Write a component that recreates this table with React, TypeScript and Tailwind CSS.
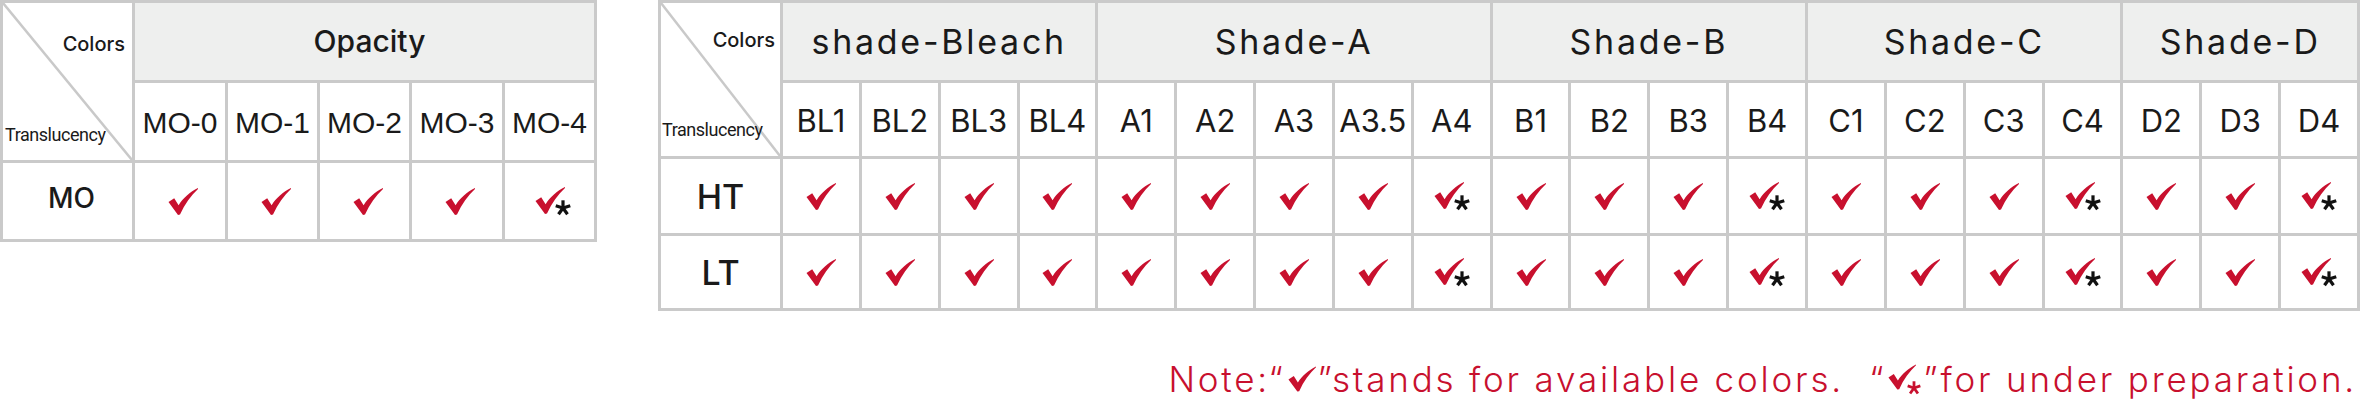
const RED = "#c8102e";

const Check = ({ className = "w-[30px] h-[27px]" }: { className?: string }) => (
  <svg viewBox="0 0 30 27" className={className}>
    <path
      d="M0.5 14 L6.2 10.3 L10.6 17.2 C15 10 22 4 30 0 L30 1 C23 7.5 16.8 16 12 26.6 L10 26.9 Z"
      fill={RED}
    />
  </svg>
);

const Asterisk = ({ color = "#111", className = "w-[15px] h-[15px]" }: { color?: string; className?: string }) => (
  <svg viewBox="0 0 15 15" className={className}>
    <g stroke={color} strokeWidth="3" strokeLinecap="butt">
      <line x1="7.5" y1="7.5" x2="7.5" y2="0.3" />
      <line x1="7.5" y1="7.5" x2="14.3" y2="5.3" />
      <line x1="7.5" y1="7.5" x2="11.7" y2="13.4" />
      <line x1="7.5" y1="7.5" x2="3.3" y2="13.4" />
      <line x1="7.5" y1="7.5" x2="0.7" y2="5.3" />
    </g>
  </svg>
);

const Mark = ({ star }: { star?: boolean }) =>
  star ? (
    <div className="flex items-start">
      <Check />
      <Asterisk className="w-[16px] h-[16px] -ml-[10px] mt-[13px]" />
    </div>
  ) : (
    <Check />
  );

const Diagonal = ({ colorsClass, transClass }: { colorsClass: string; transClass: string }) => (
  <div className="relative bg-white row-span-2">
    <svg className="absolute inset-0 w-full h-full" preserveAspectRatio="none" viewBox="0 0 100 100">
      <line x1="0" y1="0" x2="100" y2="100" stroke="#c9c9c9" strokeWidth="2.5" vectorEffect="non-scaling-stroke" />
    </svg>
    <div className={`absolute font-['Inter',sans-serif] text-[20px] font-medium text-[#1a1a1a] ${colorsClass}`}>Colors</div>
    <div
      className={`absolute font-['Liberation_Sans_Narrow','Roboto',sans-serif] text-[18px] text-[#1a1a1a] tracking-tight ${transClass}`}
    >
      Translucency
    </div>
  </div>
);

const spans: Record<number, string> = { 3: "col-span-3", 4: "col-span-4", 5: "col-span-5" };

const groups = [
  { name: "shade-Bleach", cols: ["BL1", "BL2", "BL3", "BL4"] },
  { name: "Shade-A", cols: ["A1", "A2", "A3", "A3.5", "A4"] },
  { name: "Shade-B", cols: ["B1", "B2", "B3", "B4"] },
  { name: "Shade-C", cols: ["C1", "C2", "C3", "C4"] },
  { name: "Shade-D", cols: ["D2", "D3", "D4"] },
];
const starred = ["A4", "B4", "C4", "D4"];
const allCols = groups.flatMap((g) => g.cols);
const opacityCols = ["MO-0", "MO-1", "MO-2", "MO-3", "MO-4"];

export default function App() {
  return (
    <div className="w-[2374px] h-[416px] bg-white flex items-start gap-[61px] font-['Inter',sans-serif] text-[#1a1a1a]">
      {/* opacity table */}
      <div className="grid grid-cols-[129px_90px_89px_89px_90px_89px] grid-rows-[77px_77px_76px] gap-[3px] p-[3px] bg-[#cacaca] w-[597px]">
        <Diagonal colorsClass="right-[7px] top-[26px]" transClass="left-[2px] bottom-[12px]" />
        <div className="col-span-5 bg-[#eeefee] flex items-center justify-center text-[30px] font-medium pl-[10px]">
          Opacity
        </div>
        {opacityCols.map((c) => (
          <div key={c} className="bg-white flex items-center justify-center font-['Liberation_Sans',Arial,sans-serif] text-[30px] pt-[2px]">
            {c}
          </div>
        ))}
        <div className="bg-white flex items-center justify-center text-[28px] font-medium pl-[8px] pb-[6px]">MO</div>
        {opacityCols.map((c, i) => (
          <div key={c} className="bg-white flex items-center justify-center pl-[6px]">
            <Mark star={i === 4} />
          </div>
        ))}
      </div>

      {/* shade table + note */}
      <div className="flex flex-col items-end">
        <div className="grid grid-cols-[119px_repeat(20,minmax(0,1fr))] grid-rows-[77px_73px_74px_72px] gap-[3px] p-[3px] bg-[#cacaca] w-[1702px]">
          <Diagonal colorsClass="right-[5px] top-[22px]" transClass="left-[1px] bottom-[13px]" />
          {groups.map((g) => (
            <div
              key={g.name}
              className={`${spans[g.cols.length]} bg-[#eeefee] flex items-center justify-center text-[34px] tracking-[0.08em]`}
            >
              {g.name}
            </div>
          ))}
          {allCols.map((c) => (
            <div key={c} className="bg-white flex items-center justify-center text-[31px] pt-[3px]">
              {c}
            </div>
          ))}
          {["HT", "LT"].map((row) => (
            <>
              <div key={row} className="bg-white flex items-center justify-center text-[34px] font-medium">
                {row}
              </div>
              {allCols.map((c) => (
                <div key={row + c} className="bg-white flex items-center justify-center">
                  <Mark star={starred.includes(c)} />
                </div>
              ))}
            </>
          ))}
        </div>

        <div className="mt-[47px] mr-[3px] flex items-center text-[35px] font-light leading-[42px] text-[#c8102e] whitespace-pre tracking-[0.08em]">
          <span>Note:“</span>
          <Check className="w-[28px] h-[26px] mx-[2px]" />
          <span>”stands for available colors.  “</span>
          <div className="flex items-start mx-[2px]">
            <Check className="w-[28px] h-[26px]" />
            <Asterisk color={RED} className="w-[14px] h-[14px] -ml-[9px] mt-[17px]" />
          </div>
          <span>”for under preparation.</span>
        </div>
      </div>
    </div>
  );
}
